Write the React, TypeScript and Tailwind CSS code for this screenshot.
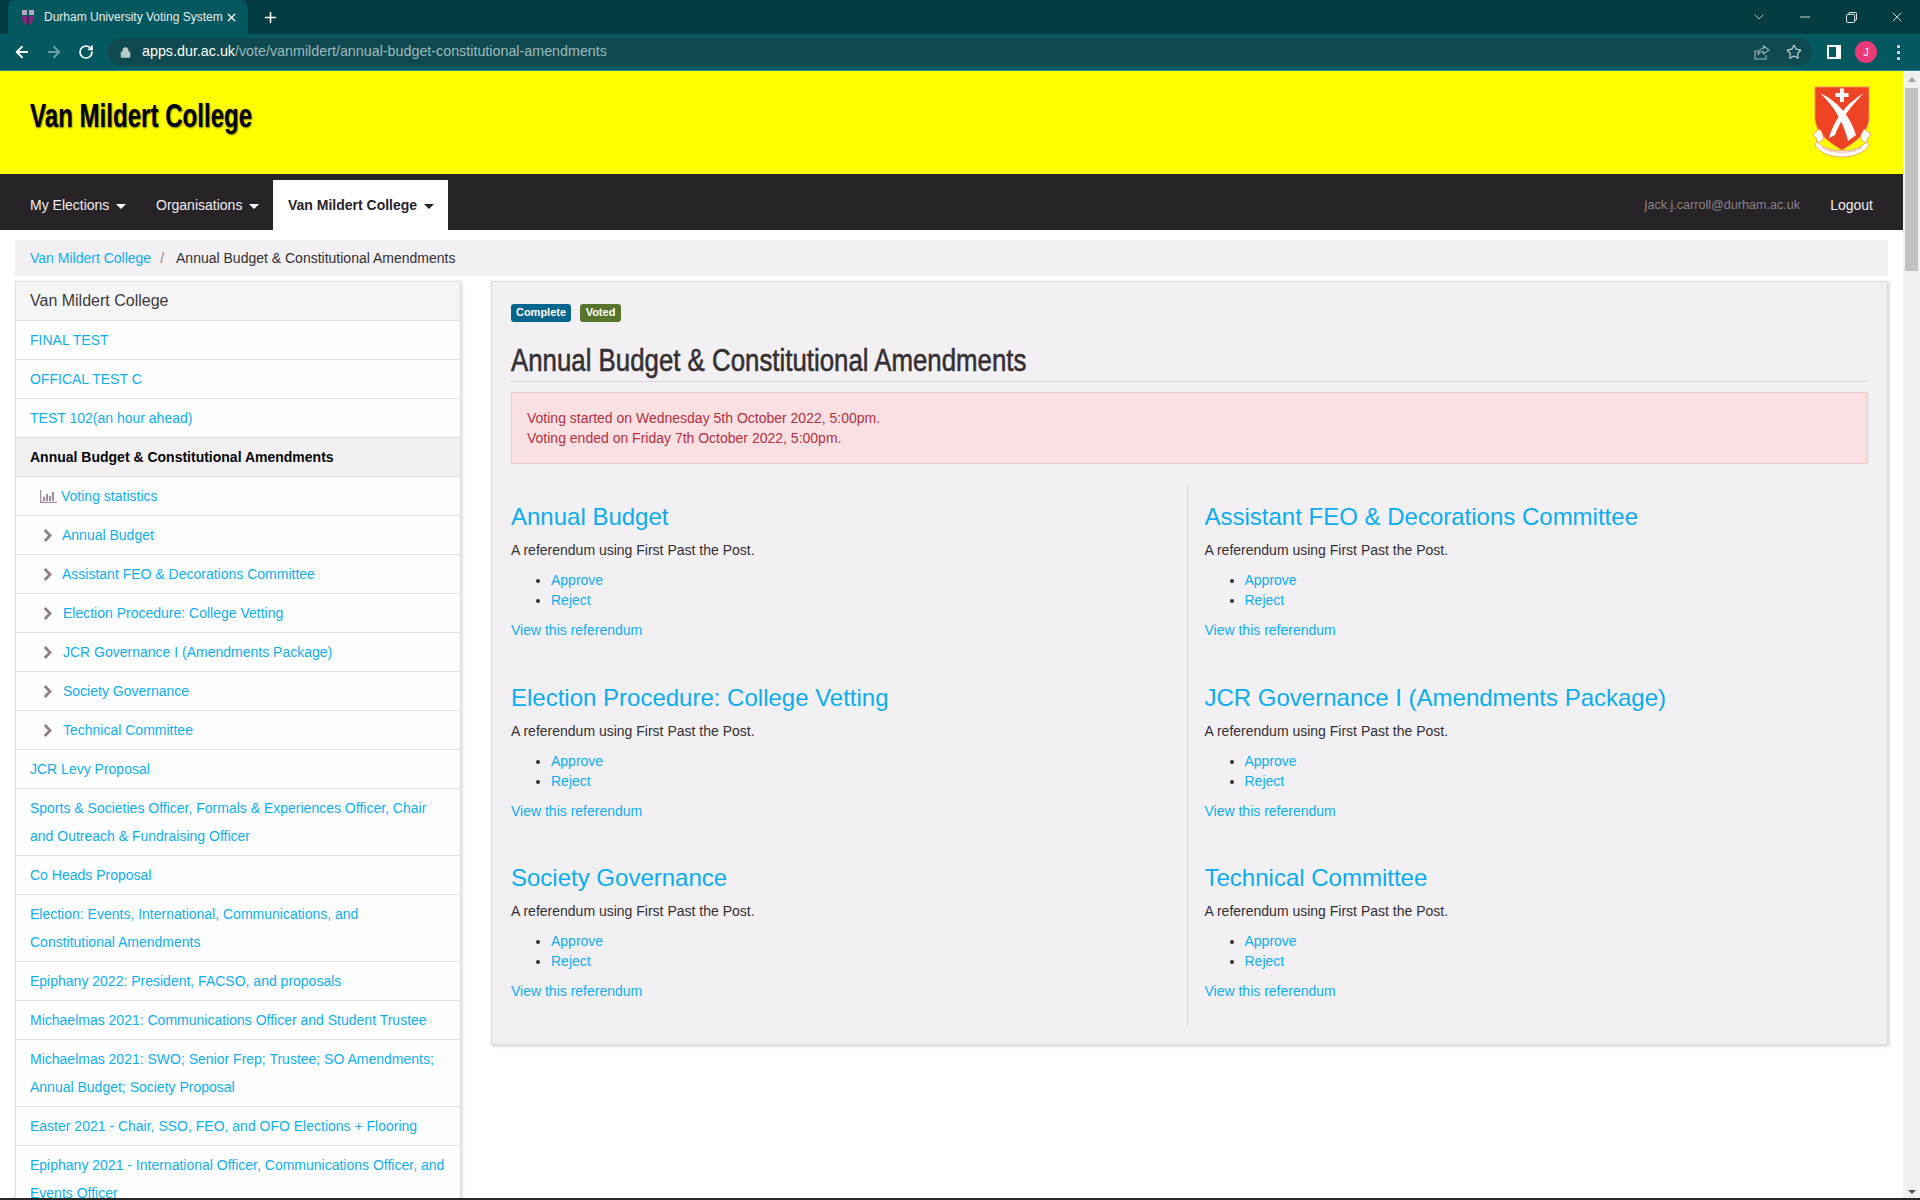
import React from "react";
import { ArrowLeft, ArrowRight, RotateCw, Lock, Star, X, Plus, Minus, ChevronDown } from "lucide-react";

const sans = "font-['Liberation_Sans',Arial,sans-serif]";

const Caret = ({ cls = "border-t-white" }: { cls?: string }) => (
  <span className={`inline-block ml-[7px] w-0 h-0 border-x-[5px] border-x-transparent border-t-[5px] align-middle ${cls}`} />
);

const Crest = () => (
  <svg width="60" height="74" viewBox="0 0 60 74" className="block">
    <path d="M3 2 H57 V32 C57 48 42 58 30 65 C18 58 3 48 3 32 Z" fill="#ee4423" stroke="#f9925c" strokeWidth="1" />
    <path d="M8.500 8.500 C24 15 38 30 44 50 L36 56 C32 38 22 21 8.500 8.500 Z" fill="#fff" />
    <path d="M51.500 8.500 C38 16 24 30 17 53 L23 50 C28 36 38 22 51.500 8.500 Z" fill="#fff" />
    <path d="M28 3.500 H32 V8 H36.500 V12 H32 V17 H28 V12 H23.500 V8 H28 Z" fill="#fff" />
    <path d="M5 56 C14 69 46 69 55 56 L57 60 C48 76 12 76 3 60 Z" fill="#fff" stroke="#f9925c" strokeWidth="0.8" />
    <path d="M1 49 L8 44 L11 50 L11 55 L6 58 L4 53 Z" fill="#fff" stroke="#f9925c" strokeWidth="0.8" />
    <path d="M59 49 L52 44 L49 50 L49 55 L54 58 L56 53 Z" fill="#fff" stroke="#f9925c" strokeWidth="0.8" />
    <path d="M10 62 C18 69 42 69 50 62" fill="none" stroke="#f3a48a" strokeWidth="1.2" strokeDasharray="2 1" />
  </svg>
);

const Favicon = () => (
  <svg width="14" height="16" viewBox="0 0 14 16" className="shrink-0">
    <path d="M1 1 H6 V6 H1 Z M8 1 H13 V6 H8 Z" fill="#b9a6c0" />
    <path d="M1 7 H13 V10 C13 13 10 15 7 16 C4 15 1 13 1 10 Z" fill="#7a2a80" />
    <path d="M6 7 H8 V16 H6 Z" fill="#3f2b47" />
  </svg>
);

const Share = () => (
  <svg width="16" height="15" viewBox="0 0 16 15" fill="none" stroke="#9fb4b6" strokeWidth="1.1">
    <path d="M4 6 H1 V14 H12 V10" />
    <path d="M9.500 1 L15 5 L9.500 9 V6.500 C7 6.500 5 7.500 4 10 C4 6.500 6 3.800 9.500 3.500 Z" />
  </svg>
);

type Row = { t: string; kind?: "active" | "stat" | "sub"; ml?: string };
const rows: Row[] = [
  { t: "FINAL TEST" },
  { t: "OFFICAL TEST C" },
  { t: "TEST 102(an hour ahead)" },
  { t: "Annual Budget & Constitutional Amendments", kind: "active" },
  { t: "Voting statistics", kind: "stat" },
  { t: "Annual Budget", kind: "sub", ml: "ml-[10px]" },
  { t: "Assistant FEO & Decorations Committee", kind: "sub", ml: "ml-[10px]" },
  { t: "Election Procedure: College Vetting", kind: "sub", ml: "ml-[11px]" },
  { t: "JCR Governance I (Amendments Package)", kind: "sub", ml: "ml-[11px]" },
  { t: "Society Governance", kind: "sub", ml: "ml-[11px]" },
  { t: "Technical Committee", kind: "sub", ml: "ml-[11px]" },
  { t: "JCR Levy Proposal" },
  { t: "Sports & Societies Officer, Formals & Experiences Officer, Chair and Outreach & Fundraising Officer" },
  { t: "Co Heads Proposal" },
  { t: "Election: Events, International, Communications, and Constitutional Amendments" },
  { t: "Epiphany 2022: President, FACSO, and proposals" },
  { t: "Michaelmas 2021: Communications Officer and Student Trustee" },
  { t: "Michaelmas 2021: SWO; Senior Frep; Trustee; SO Amendments; Annual Budget; Society Proposal" },
  { t: "Easter 2021 - Chair, SSO, FEO, and OFO Elections + Flooring" },
  { t: "Epiphany 2021 - International Officer, Communications Officer, and Events Officer" },
];

const SideRow = ({ r }: { r: Row }) => {
  if (r.kind === "active")
    return <div className="px-[14px] py-[5px] leading-[28px] border-b border-[#dfdfdf] bg-[#f2f0f3] font-bold text-[#050505]">{r.t}</div>;
  if (r.kind === "stat")
    return (
      <div className="pl-[24px] pr-[14px] py-[5px] leading-[28px] border-b border-[#dfdfdf] flex items-center">
        <svg width="17" height="13" viewBox="0 0 17 13" className="mr-[4px]" fill="#a08f9a">
          <path d="M0 0 H1.200 V11.800 H17 V13 H0 Z M3 7 H5 V11 H3 Z M6 4 H8 V11 H6 Z M9 6 H11 V11 H9 Z M12 2 H14 V11 H12 Z" />
        </svg>
        <a className="text-[#0eaef2]">{r.t}</a>
      </div>
    );
  if (r.kind === "sub")
    return (
      <div className="pl-[27px] pr-[14px] py-[5px] leading-[28px] border-b border-[#dfdfdf] flex items-center">
        <svg width="9" height="13" viewBox="0 0 9 13" fill="none" stroke="#8f7f88" strokeWidth="2.800" className="shrink-0">
          <path d="M1.800 1 L7 6.500 L1.800 12" />
        </svg>
        <a className={`text-[#0eaef2] ${r.ml}`}>{r.t}</a>
      </div>
    );
  return <div className="px-[14px] py-[5px] leading-[28px] border-b border-[#dfdfdf] text-[#0eaef2]">{r.t}</div>;
};

const items = [
  "Annual Budget",
  "Assistant FEO & Decorations Committee",
  "Election Procedure: College Vetting",
  "JCR Governance I (Amendments Package)",
  "Society Governance",
  "Technical Committee",
];

const Referendum = ({ t, right }: { t: string; right: boolean }) => (
  <div className={`h-[180.500px] pt-[19px] ${right ? "pl-[16.500px]" : ""}`}>
    <h2 className="text-[24px] leading-[26px] text-[#0badf0]">{t}</h2>
    <p className="mt-[10px] leading-[20px] text-[#332f33]">A referendum using First Past the Post.</p>
    <ul className="mt-[10px] pl-[40px] list-disc leading-[20px] text-[#332f33]">
      <li><a className="text-[#0eaef2]">Approve</a></li>
      <li><a className="text-[#0eaef2]">Reject</a></li>
    </ul>
    <a className="block mt-[10px] leading-[20px] text-[#0eaef2]">View this referendum</a>
  </div>
);

export default function App() {
  return (
    <div className={`h-[1200px] w-[1920px] flex flex-col overflow-hidden bg-white text-[14px] ${sans}`}>
      {/* browser chrome */}
      <div className="h-[34px] bg-[#033c42] flex items-center pl-[8px] shrink-0">
        <div className="w-[240px] h-[34px] bg-[#04585f] rounded-t-[8px] flex items-center pl-[13px] pr-[10px]">
          <Favicon />
          <span className="ml-[9px] mr-[1px] text-[12px] text-[#e6eeee] whitespace-nowrap flex-1 min-w-0">Durham University Voting System</span>
          <X size={13} strokeWidth={2.4} className="text-white shrink-0" />
        </div>
        <Plus size={17} strokeWidth={2.2} className="text-white ml-[14px]" />
        <div className="ml-auto flex items-center h-[34px] text-white">
          <div className="w-[46px] h-[28px] flex items-center justify-center"><ChevronDown size={16} strokeWidth={1} /></div>
          <div className="w-[46px] h-[28px] flex items-center justify-center"><Minus size={16} strokeWidth={1.2} /></div>
          <div className="w-[46px] h-[28px] flex items-center justify-center">
            <svg width="11" height="11" viewBox="0 0 12 12" fill="none" stroke="white"><path d="M3 2.500 V1.500 Q3 .5 4 .5 H10 Q11.500 .5 11.500 2 V8 Q11.500 9 10 9 H9.500" /><rect x=".5" y="2.500" width="9" height="9" rx="1.500" /></svg>
          </div>
          <div className="w-[46px] h-[28px] flex items-center justify-center"><X size={16} strokeWidth={1.2} /></div>
        </div>
      </div>
      <div className="h-[37px] bg-[#04585f] flex items-start shrink-0 border-b border-[#2b8f99]">
        <ArrowLeft size={18} strokeWidth={2.4} className="text-white ml-[13px] mt-[9px]" />
        <ArrowRight size={18} strokeWidth={2.4} className="text-[#6f9ea2] ml-[14px] mt-[9px]" />
        <RotateCw size={16} strokeWidth={2.6} className="text-white ml-[15px] mt-[10px]" />
        <div className="ml-[14px] mt-[4px] w-[1704px] h-[28px] rounded-full bg-[#0f4a50] flex items-center pl-[12px]">
          <Lock size={11} strokeWidth={3} className="text-[#b9cacc] fill-[#b9cacc]" />
          <span className="ml-[11px] text-[14.3px] text-white">apps.dur.ac.uk<span className="text-[#9db9bc]">/vote/vanmildert/annual-budget-constitutional-amendments</span></span>
          <div className="ml-auto mr-[10px] flex items-center gap-[16px]">
            <Share />
            <Star size={16} strokeWidth={1.8} className="text-[#b9cacc]" />
          </div>
        </div>
        <div className="ml-[15px] mt-[11px] w-[14px] h-[14px] border-[2px] border-white border-r-[5px]" />
        <div className="ml-[14px] mt-[7px] w-[22px] h-[22px] rounded-full bg-[#ea3a78] text-white text-[11px] flex items-center justify-center">J</div>
        <div className="ml-[20px] mt-[11px] flex flex-col gap-[3px]">
          <span className="w-[3px] h-[3px] rounded-full bg-white" />
          <span className="w-[3px] h-[3px] rounded-full bg-white" />
          <span className="w-[3px] h-[3px] rounded-full bg-white" />
        </div>
      </div>

      <div className="flex-1 min-h-0 flex">
        <div className="flex-1 min-w-0 flex flex-col">
          {/* banner */}
          <div className="h-[103px] shrink-0 bg-[#ffff00] flex items-start justify-between pl-[30px] pr-[31px]">
            <h1 className="mt-[22px] text-[33px] leading-[46px] font-bold text-black [text-shadow:1px_1px_2px_rgba(0,0,0,0.55)] whitespace-nowrap origin-left scale-x-[0.73]">Van Mildert College</h1>
            <div className="mt-[14px]"><Crest /></div>
          </div>
          {/* nav */}
          <div className="h-[56px] shrink-0 bg-[#272327] flex items-end text-[14px] text-[#f0eff0]">
            <div className="pl-[30px] w-[143px] h-[50px] leading-[50px] whitespace-nowrap">My Elections<Caret /></div>
            <div className="pl-[13px] w-[130px] h-[50px] leading-[50px] whitespace-nowrap">Organisations<Caret /></div>
            <div className="pl-[15px] w-[175px] h-[50px] leading-[50px] bg-white text-[#272327] font-bold whitespace-nowrap">Van Mildert College<Caret cls="border-t-[#272327]" /></div>
            <div className="ml-auto h-[50px] leading-[50px] text-[#8a8388] text-[12.6px] whitespace-nowrap">jack.j.carroll@durham.ac.uk</div>
            <div className="ml-[30px] mr-[30px] h-[50px] leading-[50px] whitespace-nowrap">Logout</div>
          </div>
          {/* breadcrumb */}
          <div className="mx-[15px] mt-[10px] h-[36px] bg-[#f2f0f3] shrink-0 flex items-center pl-[15px] whitespace-nowrap">
            <a className="text-[#0eaef2]">Van Mildert College</a>
            <span className="text-[#8a8388] ml-[9px] mr-[12px]">/</span>
            <span className="text-[#332f33]">Annual Budget &amp; Constitutional Amendments</span>
          </div>
          {/* body */}
          <div className="mt-[5px] mx-[15px] flex items-start gap-[30px] min-h-0 flex-1">
            <div className="w-[446px] shrink-0 border border-[#dfdfdf] border-b-0 shadow-[1px_1px_3px_rgba(0,0,0,0.18)] bg-[#fefefe]">
              <div className="h-[39px] px-[14px] leading-[38px] text-[16px] bg-[#f5f5f6] border-b border-[#dfdfdf] text-[#3c383c]">Van Mildert College</div>
              {rows.map((r) => <SideRow key={r.t} r={r} />)}
            </div>
            <div className="flex-1 min-w-0 h-[764px] border border-[#dcdadd] bg-[#f2f0f3] shadow-[1px_1px_3px_rgba(0,0,0,0.2)] px-[19px] pt-[22px]">
              <div className="flex gap-[9px] h-[18px]">
                <span className="h-[18px] w-[60px] rounded-[3px] bg-[#05668d] text-white text-[11px] font-bold leading-[16px] text-center">Complete</span>
                <span className="h-[18px] w-[41px] rounded-[3px] bg-[#56752b] text-white text-[11px] font-bold leading-[16px] text-center">Voted</span>
              </div>
              <div className="mt-[19px] h-[41px] border-b border-[#d8d6da]">
                <h1 className="text-[32px] leading-[38px] font-normal text-[#332f33] [-webkit-text-stroke:0.6px_#332f33] whitespace-nowrap origin-left scale-x-[0.807]">Annual Budget &amp; Constitutional Amendments</h1>
              </div>
              <div className="mt-[10px] h-[72px] border border-[#f7c6cb] bg-[#fae0e3] text-[#b5303f] pl-[15px] pt-[15px] leading-[20px]">
                <div>Voting started on Wednesday 5th October 2022, 5:00pm.</div>
                <div>Voting ended on Friday 7th October 2022, 5:00pm.</div>
              </div>
              <div className="mt-[21px] grid grid-cols-[677px_1fr]">
                <div className="border-r border-[#d8d6da] h-[541px]">
                  {items.filter((_, i) => i % 2 === 0).map((t) => <Referendum key={t} t={t} right={false} />)}
                </div>
                <div className="h-[541px]">
                  {items.filter((_, i) => i % 2 === 1).map((t) => <Referendum key={t} t={t} right />)}
                </div>
              </div>
            </div>
          </div>
        </div>
        {/* scrollbar */}
        <div className="w-[17px] shrink-0 bg-[#f1f1f1] flex flex-col items-center pt-[6px] pb-[4px]">
          <span className="w-0 h-0 border-x-[4px] border-x-transparent border-b-[5px] border-b-[#a3a3a3]" />
          <span className="mt-[6px] w-[13px] h-[183px] bg-[#c1c1c1]" />
          <span className="mt-auto w-0 h-0 border-x-[4px] border-x-transparent border-t-[4px] border-t-[#505050]" />
        </div>
      </div>
      <div className="h-[2px] shrink-0 bg-[#272727]" />
    </div>
  );
}
